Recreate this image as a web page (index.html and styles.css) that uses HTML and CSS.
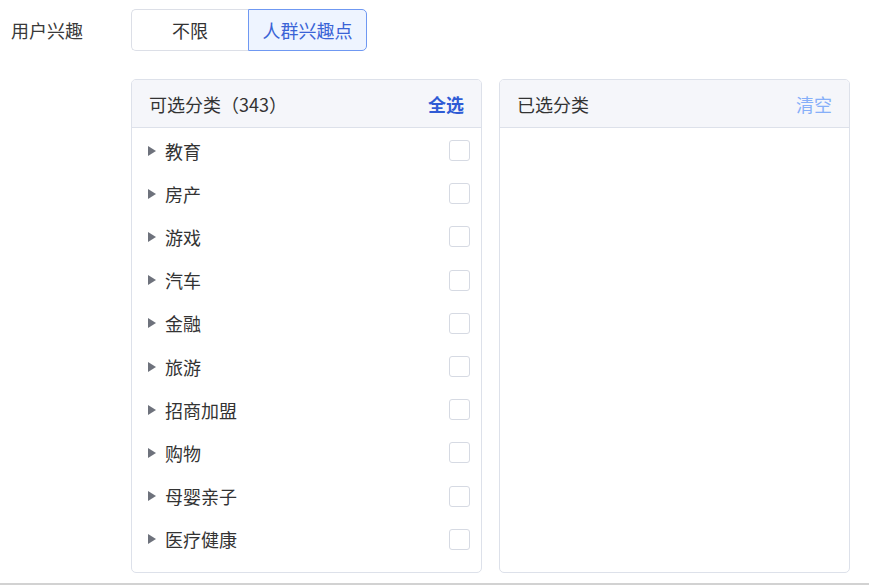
FILE: index.html
```html
<!DOCTYPE html>
<html lang="zh-CN">
<head>
    <meta charset="UTF-8">
    <title>用户兴趣</title>
    <link rel="stylesheet" href="styles.css">
</head>
<body>
    <div class="form-row">
        <div class="form-label">用户兴趣</div>
        <div class="seg-group">
            <button class="seg-btn">不限</button>
            <button class="seg-btn active">人群兴趣点</button>
        </div>
    </div>
    <div class="transfer">
        <div class="panel">
            <div class="panel-head">
                <span>可选分类（343）</span>
                <a class="link-all">全选</a>
            </div>
            <ul class="cat-list">
                <li><span class="arrow"></span><span class="cat-name">教育</span><span class="check"></span></li>
                <li><span class="arrow"></span><span class="cat-name">房产</span><span class="check"></span></li>
                <li><span class="arrow"></span><span class="cat-name">游戏</span><span class="check"></span></li>
                <li><span class="arrow"></span><span class="cat-name">汽车</span><span class="check"></span></li>
                <li><span class="arrow"></span><span class="cat-name">金融</span><span class="check"></span></li>
                <li><span class="arrow"></span><span class="cat-name">旅游</span><span class="check"></span></li>
                <li><span class="arrow"></span><span class="cat-name">招商加盟</span><span class="check"></span></li>
                <li><span class="arrow"></span><span class="cat-name">购物</span><span class="check"></span></li>
                <li><span class="arrow"></span><span class="cat-name">母婴亲子</span><span class="check"></span></li>
                <li><span class="arrow"></span><span class="cat-name">医疗健康</span><span class="check"></span></li>
            </ul>
        </div>
        <div class="panel">
            <div class="panel-head">
                <span>已选分类</span>
                <a class="link-clear">清空</a>
            </div>
        </div>
    </div>
    <div class="page-bottom"></div>
</body>
</html>
```

FILE: styles.css
```css
body {
    margin: 0;
    font-family: "Noto Sans CJK SC", "Noto Sans", sans-serif;
    font-size: 18px;
    color: #333;
    background: #fff;
}
.form-row {
    display: flex;
    align-items: center;
    padding-top: 9px;
}
.form-label {
    width: 120px;
    padding-left: 11px;
    color: #3a3a3a;
}
.seg-group {
    display: flex;
}
.seg-btn {
    font-family: inherit;
    font-size: 18px;
    height: 42px;
    width: 117px;
    background: #fff;
    color: #333;
    border: 1px solid #dcdfe7;
    padding: 0;
    cursor: pointer;
}
.seg-btn:first-child {
    border-radius: 5px 0 0 5px;
    border-right: none;
}
.seg-btn.active {
    width: 119px;
    color: #3a63d6;
    background: #eef4ff;
    border-color: #6f98f2;
    border-radius: 0 5px 5px 0;
}
.transfer {
    display: flex;
    gap: 17px;
    margin: 28px 0 0 131px;
}
.panel {
    width: 349px;
    height: 492px;
    border: 1px solid #dde1ea;
    border-radius: 5px;
    overflow: hidden;
}
.panel-head {
    height: 47px;
    display: flex;
    align-items: center;
    justify-content: space-between;
    padding: 0 17px 0 17px;
    background: #f5f6fa;
    border-bottom: 1px solid #dde1ea;
}
.link-all {
    color: #2f5bd5;
    font-weight: bold;
    cursor: pointer;
}
.link-clear {
    color: #86aff9;
    cursor: pointer;
}
.cat-list {
    list-style: none;
    margin: 0;
    padding: 1px 0 0 0;
}
.cat-list li {
    height: 43.2px;
    display: flex;
    align-items: center;
    padding: 0 11px 0 16px;
}
.arrow {
    width: 0;
    height: 0;
    border-top: 5px solid transparent;
    border-bottom: 5px solid transparent;
    border-left: 8px solid #6e727c;
    margin-right: 9px;
}
.cat-name {
    flex: 1;
}
.check {
    width: 19px;
    height: 19px;
    border: 1px solid #d6dae3;
    border-radius: 3px;
    background: #fff;
}
.page-bottom {
    margin-top: 10px;
    border-top: 2px solid #d2d2d2;
}
```
